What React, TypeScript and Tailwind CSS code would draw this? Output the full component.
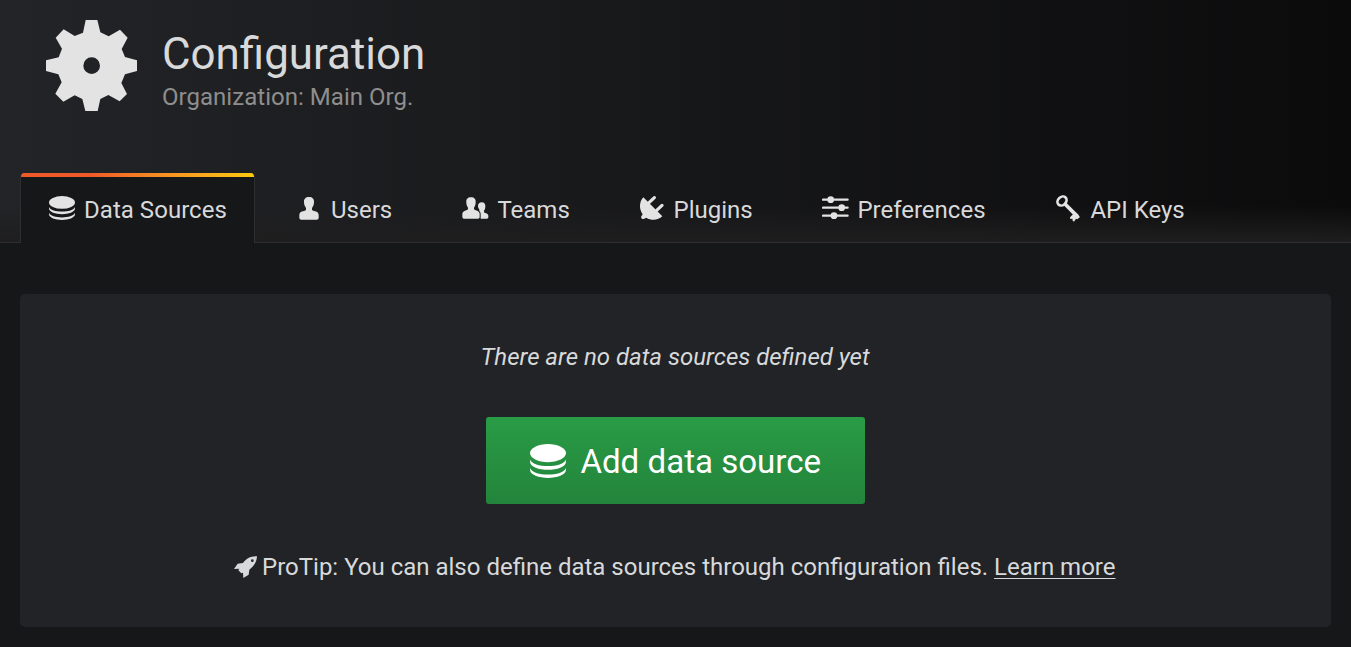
import type { ReactNode } from 'react';

function Gear() {
  return (
    <svg width="91" height="91" viewBox="48 44 273 273" fill="#e3e3e3" className="shrink-0">
      <path
        fillRule="evenodd"
        d="M167 44H202L211 81L236 93L270 73L293 97L275 131L285 155L321 165V197L285 207L274 233L291 266L269 288L235 269L211 281L203 317H166L157 281L134 270L100 289L76 265L95 231L85 207L48 197V165L86 156L96 130L77 97L101 72L134 92L159 82ZM185 156A25 25 0 1 0 185 206A25 25 0 1 0 185 156Z"
      />
    </svg>
  );
}

function Database({ className }: { className: string }) {
  return (
    <svg viewBox="150 114 108 101" preserveAspectRatio="none" fill="currentColor" className={className}>
      <ellipse cx="204" cy="141" rx="54" ry="27" />
      <path d="M150 160C158 186 250 186 258 160V166C258 199 150 199 150 166Z" />
      <path d="M150 185C158 211 250 211 258 185V190C258 223 150 223 150 190Z" />
    </svg>
  );
}

function User() {
  return (
    <svg width="20" height="23" viewBox="57 35 60 69" fill="currentColor">
      <path d="M87 35C97 35 103 41 102 51C102 59 99 64 96 68V74C102 79 116 77 116 89V98Q116 103 110 103H64Q58 103 58 98V89C58 77 72 79 78 74V68C75 64 72 59 72 51C71 41 77 35 87 35Z" />
    </svg>
  );
}

function Team() {
  return (
    <svg width="27" height="22" viewBox="545 36 81 66" fill="currentColor">
      <path d="M572 37C582 37 587 43 586 52C586 59 584 64 581 68V73C587 78 598 77 598 88V96Q598 101 593 101H551Q546 101 546 96V88C546 77 558 78 563 73V68C560 64 558 59 558 52C557 43 562 37 572 37Z" />
      <path d="M604 52C612 52 616 58 615 65C615 70 613 74 611 77V82C616 86 624 85 624 93V97Q624 101 620 101H601V87C601 82 599 79 596 77L598 75C595 71 593 67 593 63C593 56 598 52 604 52Z" />
    </svg>
  );
}

function Plug() {
  return (
    <svg width="24" height="24" viewBox="30 33 72 72" fill="currentColor">
      <path d="M40 37L97 94C84 107 63 107 49 98L41 102C36 103 32 99 34 94L38 88C26 72 28 49 40 37Z" />
      <path d="M57 53L73 38M80 76L96 61" stroke="currentColor" strokeWidth="9.5" strokeLinecap="round" />
    </svg>
  );
}

function Sliders() {
  return (
    <svg width="27" height="24" viewBox="575 34 81 72" fill="currentColor">
      <path d="M578 45H652M578 69H652M578 93H652" stroke="currentColor" strokeWidth="6.5" strokeLinecap="round" />
      <circle cx="601" cy="45" r="10" />
      <circle cx="634" cy="69" r="10" />
      <circle cx="611" cy="93" r="10" />
    </svg>
  );
}

function Key() {
  return (
    <svg width="24" height="27" viewBox="47 28 72 81" fill="none" stroke="currentColor">
      <ellipse cx="65" cy="46" rx="12" ry="15" strokeWidth="8" transform="rotate(45 65 46)" />
      <path d="M74 55L112 93" strokeWidth="11" />
      <path d="M108 83L119 94L111 101L107 99L101 108L96 104L97 99L90 100L89 95L98 86Z" fill="currentColor" stroke="none" />
    </svg>
  );
}

function Rocket() {
  return (
    <svg width="23" height="22" viewBox="27 32 69 66" fill="currentColor" className="shrink-0">
      <path
        fillRule="evenodd"
        d="M96 33C76 33 64 40 54 53L38 55L27 71L43 70L40 75L49 84L54 82L55 98L71 88L73 73C87 62 95 50 96 33ZM82 42A4 4 0 1 1 82 50A4 4 0 1 1 82 42Z"
      />
    </svg>
  );
}

interface TabProps {
  icon: ReactNode;
  label: string;
  width: string;
  slot: string;
}

function Tab({ icon, label, width, slot }: TabProps) {
  return (
    <a className={`flex h-[69px] items-center pt-[2px] pl-[29px] ${width}`}>
      <span className={`flex shrink-0 pb-[3px] text-[#e3e3e3] ${slot}`}>{icon}</span>
      <span className="whitespace-nowrap">{label}</span>
    </a>
  );
}

export default function App() {
  return (
    <div className="h-[647px] w-[1351px] overflow-hidden bg-[#161719] font-['Roboto',sans-serif] text-[24px] text-[#d8d9da]">
      <header className="flex h-[243px] flex-col justify-between border-b border-[#2f2f32] bg-[linear-gradient(to_top,#1e1e1f_0px,#1e1e1f00_36px),linear-gradient(90deg,#232427,#0b0b0c)]">
        <div className="flex pt-5 pl-[46px]">
          <Gear />
          <div className="pt-[8px] pl-[25px]">
            <h1 className="text-[43.9px] leading-[52px]">Configuration</h1>
            <p className="pt-[3px] leading-[28px] tracking-[0.03px] text-[#8e8e8e]">Organization: Main Org.</p>
          </div>
        </div>
        <nav className="-mb-px flex items-end pl-5">
          <div className="mr-[15px] h-[70px] w-[235px] overflow-hidden rounded-t-[4px] border-x border-[#2f2f32] bg-[#161719]">
            <div className="-mx-px h-1 bg-linear-to-r from-[#f05a28] from-30% to-[#fbca0a]" />
            <a className="flex h-[66px] items-center pl-[28px]">
              <Database className="mr-[9px] mb-[4px] h-6 w-[26px] text-[#e3e3e3]" />
              <span className="tracking-[0.04px] whitespace-nowrap">Data Sources</span>
            </a>
          </div>
          <Tab icon={<User />} label="Users" width="w-[163px]" slot="w-[32px]" />
          <Tab icon={<Team />} label="Teams" width="w-[178px]" slot="w-[35.4px]" />
          <Tab icon={<Plug />} label="Plugins" width="w-[182px]" slot="w-[33.6px]" />
          <Tab icon={<Sliders />} label="Preferences" width="w-[234px]" slot="w-[35.4px]" />
          <Tab icon={<Key />} label="API Keys" width="w-[200px]" slot="w-[34.4px]" />
        </nav>
      </header>
      <main className="mx-5 mt-[51px] flex h-[333px] flex-col items-center rounded-[5px] bg-[#222326]">
        <p className="mt-[49px] pr-px leading-7 italic">There are no data sources defined yet</p>
        <button className="mt-[46px] flex h-[87px] w-[379px] items-center rounded-[3px] bg-linear-to-b from-[#299c46] to-[#23843b] pl-[44px] text-[33.1px] text-white [text-shadow:0_-1px_0_rgba(0,0,0,0.1)]">
          <Database className="mr-[14.4px] h-[34px] w-9" />
          <span className="pt-[2px] whitespace-nowrap">Add data source</span>
        </button>
        <p className="mt-[49px] flex items-center pr-[1.5px] leading-7 whitespace-nowrap">
          <Rocket />
          <span className="ml-[5px]">
            ProTip: You can also define data sources through configuration files.{' '}
            <a className="underline decoration-1 underline-offset-3">Learn more</a>
          </span>
        </p>
      </main>
    </div>
  );
}
